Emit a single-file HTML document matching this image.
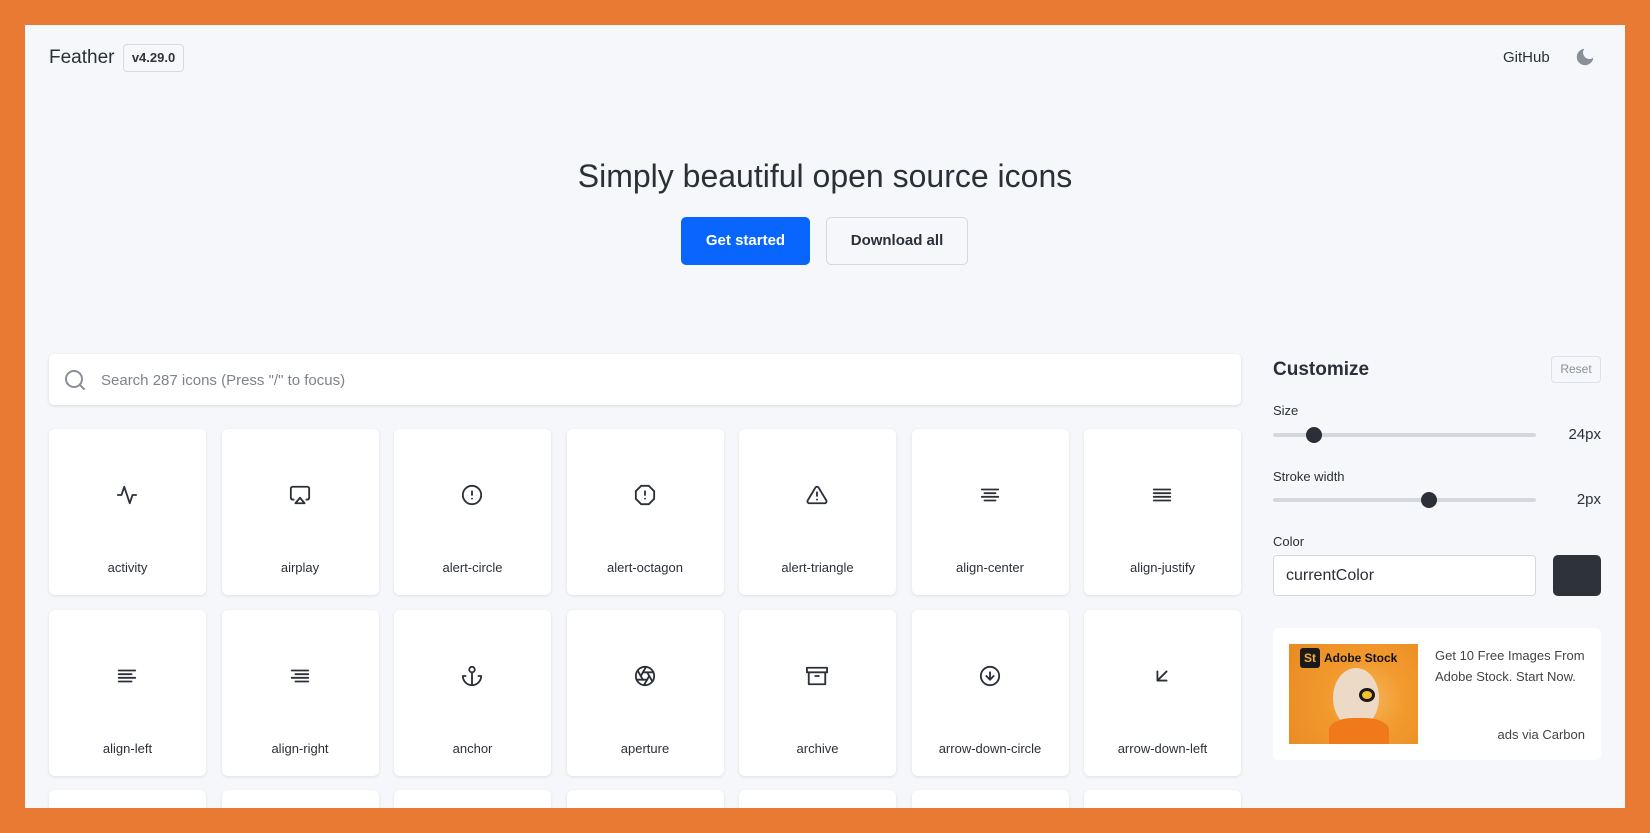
<!DOCTYPE html>
<html><head><meta charset="utf-8"><style>
*{box-sizing:border-box;margin:0;padding:0}
html,body{width:1650px;height:833px;overflow:hidden}
body{background:#e97a33;font-family:"Liberation Sans",sans-serif;color:#2b3038}
.page{position:absolute;left:25px;top:25px;width:1600px;height:783px;background:#f5f7fa;overflow:hidden}
.a{position:absolute}
.card{position:absolute;width:157px;height:166px;background:#fff;border-radius:6px;box-shadow:0 1px 3px rgba(0,0,0,.1)}
.card svg{position:absolute;left:67px;top:55px}
.card span{position:absolute;left:0;right:0;top:131px;text-align:center;font-size:13px;color:#2b3038}
svg{fill:none;stroke:#2b3038;stroke-width:2;stroke-linecap:round;stroke-linejoin:round}
.track{position:absolute;height:4px;background:#d4d7db;border-radius:2px}
.knob{position:absolute;width:16px;height:16px;border-radius:50%;background:#2b3038}
</style></head><body>
<div class="page">
<div class="a" style="left:24px;top:22px;font-size:19px;color:#2b3038">Feather</div>
<div class="a" style="left:98px;top:19px;width:61px;height:28px;border:1px solid #d7dbe0;border-radius:4px;font-size:13px;font-weight:bold;line-height:26px;text-align:center;color:#333">v4.29.0</div>
<div class="a" style="left:1478px;top:24px;font-size:15px">GitHub</div>
<svg class="a" style="left:1549px;top:21px;stroke:none;fill:#8a8f98" width="22" height="22" viewBox="0 0 24 24"><path d="M21 12.79A9 9 0 1 1 11.21 3 7 7 0 0 0 21 12.79z"/></svg>
<div class="a" style="left:0;width:1600px;top:133px;text-align:center;font-size:32px;color:#2b3038">Simply beautiful open source icons</div>
<div class="a" style="left:656px;top:192px;width:129px;height:48px;background:#0866ff;border-radius:5px;color:#fff;font-weight:bold;font-size:15px;line-height:48px;text-align:center">Get started</div>
<div class="a" style="left:801px;top:192px;width:142px;height:48px;background:#f5f7fa;border:1px solid #d5d9de;border-radius:5px;font-weight:bold;font-size:15px;line-height:46px;text-align:center;color:#2b3038">Download all</div>
<div class="a" style="left:24px;top:329px;width:1192px;height:51px;background:#fff;border-radius:5px;box-shadow:0 1px 3px rgba(0,0,0,.12)"></div>
<svg class="a" style="left:38px;top:343px;stroke:#8a8f98" width="24" height="24" viewBox="0 0 24 24"><circle cx="11" cy="11" r="8"/><line x1="21" y1="21" x2="16.65" y2="16.65"/></svg>
<div class="a" style="left:76px;top:347px;font-size:15px;color:#7d838b">Search 287 icons (Press "/" to focus)</div>

<div class="a" style="left:1248px;top:334px;font-size:19px;font-weight:bold;color:#2b3038">Customize</div>
<div class="a" style="left:1526px;top:331px;width:50px;height:27px;border:1px solid #dfe2e6;border-radius:4px;font-size:12px;color:#8a8f98;text-align:center;line-height:25px">Reset</div>
<div class="a" style="left:1248px;top:378px;font-size:13px">Size</div>
<div class="track" style="left:1248px;top:408px;width:263px"></div>
<div class="knob" style="left:1281px;top:402px"></div>
<div class="a" style="left:1520px;top:401px;width:56px;text-align:right;font-size:15px">24px</div>
<div class="a" style="left:1248px;top:444px;font-size:13px">Stroke width</div>
<div class="track" style="left:1248px;top:473px;width:263px"></div>
<div class="knob" style="left:1396px;top:467px"></div>
<div class="a" style="left:1520px;top:466px;width:56px;text-align:right;font-size:15px">2px</div>
<div class="a" style="left:1248px;top:509px;font-size:13px">Color</div>
<div class="a" style="left:1248px;top:530px;width:263px;height:41px;background:#fff;border:1px solid #d5d9de;border-radius:4px;font-size:16px;line-height:39px;padding-left:12px">currentColor</div>
<div class="a" style="left:1528px;top:530px;width:48px;height:41px;background:#2d3339;border-radius:5px"></div>

<div class="a" style="left:1248px;top:603px;width:328px;height:132px;background:#fff;border-radius:5px"></div>
<div class="a" style="left:1264px;top:619px;width:129px;height:100px;background:radial-gradient(circle at 60% 55%,#f7b65a 0,#f29a2e 40%,#e98a22 100%);overflow:hidden">
 <div class="a" style="left:44px;top:24px;width:46px;height:60px;border-radius:50%;background:#ecd9c6"></div>
 <div class="a" style="left:40px;top:74px;width:60px;height:30px;border-radius:40% 40% 0 0;background:#f07a1a"></div>
 <div class="a" style="left:70px;top:44px;width:16px;height:14px;border-radius:50%;background:#f4c030;border:3px solid #1a1a1a"></div>
 <div class="a" style="left:11px;top:4px;width:20px;height:20px;background:#1a1a1a;border-radius:3px;color:#f4b030;font-weight:bold;font-size:12px;line-height:20px;text-align:center">St</div>
 <div class="a" style="left:35px;top:7px;font-size:12px;font-weight:bold;color:#111">Adobe Stock</div>
</div>
<div class="a" style="left:1410px;top:620px;width:150px;font-size:13px;line-height:21px;color:#444">Get 10 Free Images From Adobe Stock. Start Now.</div>
<div class="a" style="left:1410px;top:702px;width:150px;text-align:right;font-size:13px;color:#444">ads via Carbon</div>

<div class="card" style="left:24px;top:404px"><svg width="22" height="22" viewBox="0 0 24 24"><polyline points="22 12 18 12 15 21 9 3 6 12 2 12"/></svg><span>activity</span></div>
<div class="card" style="left:196.5px;top:404px"><svg width="22" height="22" viewBox="0 0 24 24"><path d="M5 17H4a2 2 0 0 1-2-2V5a2 2 0 0 1 2-2h16a2 2 0 0 1 2 2v10a2 2 0 0 1-2 2h-1"/><polygon points="12 15 17 21 7 21 12 15"/></svg><span>airplay</span></div>
<div class="card" style="left:369px;top:404px"><svg width="22" height="22" viewBox="0 0 24 24"><circle cx="12" cy="12" r="10"/><line x1="12" y1="8" x2="12" y2="12"/><line x1="12" y1="16" x2="12.01" y2="16"/></svg><span>alert-circle</span></div>
<div class="card" style="left:541.5px;top:404px"><svg width="22" height="22" viewBox="0 0 24 24"><polygon points="7.86 2 16.14 2 22 7.86 22 16.14 16.14 22 7.86 22 2 16.14 2 7.86 7.86 2"/><line x1="12" y1="8" x2="12" y2="12"/><line x1="12" y1="16" x2="12.01" y2="16"/></svg><span>alert-octagon</span></div>
<div class="card" style="left:714px;top:404px"><svg width="22" height="22" viewBox="0 0 24 24"><path d="M10.290 3.86L1.82 18a2 2 0 0 0 1.71 3h16.94a2 2 0 0 0 1.71-3L13.71 3.86a2 2 0 0 0-3.42 0z"/><line x1="12" y1="9" x2="12" y2="13"/><line x1="12" y1="17" x2="12.01" y2="17"/></svg><span>alert-triangle</span></div>
<div class="card" style="left:886.5px;top:404px"><svg width="22" height="22" viewBox="0 0 24 24"><line x1="18" y1="10" x2="6" y2="10"/><line x1="21" y1="6" x2="3" y2="6"/><line x1="21" y1="14" x2="3" y2="14"/><line x1="18" y1="18" x2="6" y2="18"/></svg><span>align-center</span></div>
<div class="card" style="left:1059px;top:404px"><svg width="22" height="22" viewBox="0 0 24 24"><line x1="21" y1="10" x2="3" y2="10"/><line x1="21" y1="6" x2="3" y2="6"/><line x1="21" y1="14" x2="3" y2="14"/><line x1="21" y1="18" x2="3" y2="18"/></svg><span>align-justify</span></div>
<div class="card" style="left:24px;top:585px"><svg width="22" height="22" viewBox="0 0 24 24"><line x1="17" y1="10" x2="3" y2="10"/><line x1="21" y1="6" x2="3" y2="6"/><line x1="21" y1="14" x2="3" y2="14"/><line x1="17" y1="18" x2="3" y2="18"/></svg><span>align-left</span></div>
<div class="card" style="left:196.5px;top:585px"><svg width="22" height="22" viewBox="0 0 24 24"><line x1="21" y1="10" x2="7" y2="10"/><line x1="21" y1="6" x2="3" y2="6"/><line x1="21" y1="14" x2="3" y2="14"/><line x1="21" y1="18" x2="7" y2="18"/></svg><span>align-right</span></div>
<div class="card" style="left:369px;top:585px"><svg width="22" height="22" viewBox="0 0 24 24"><circle cx="12" cy="5" r="3"/><line x1="12" y1="22" x2="12" y2="8"/><path d="M5 12H2a10 10 0 0 0 20 0h-3"/></svg><span>anchor</span></div>
<div class="card" style="left:541.5px;top:585px"><svg width="22" height="22" viewBox="0 0 24 24"><circle cx="12" cy="12" r="10"/><line x1="14.31" y1="8" x2="20.05" y2="17.94"/><line x1="9.69" y1="8" x2="21.17" y2="8"/><line x1="7.38" y1="12" x2="13.12" y2="2.06"/><line x1="9.69" y1="16" x2="3.95" y2="6.06"/><line x1="14.31" y1="16" x2="2.83" y2="16"/><line x1="16.62" y1="12" x2="10.88" y2="21.94"/></svg><span>aperture</span></div>
<div class="card" style="left:714px;top:585px"><svg width="22" height="22" viewBox="0 0 24 24"><polyline points="21 8 21 21 3 21 3 8"/><rect x="1" y="3" width="22" height="5"/><line x1="10" y1="12" x2="14" y2="12"/></svg><span>archive</span></div>
<div class="card" style="left:886.5px;top:585px"><svg width="22" height="22" viewBox="0 0 24 24"><circle cx="12" cy="12" r="10"/><polyline points="8 12 12 16 16 12"/><line x1="12" y1="8" x2="12" y2="16"/></svg><span>arrow-down-circle</span></div>
<div class="card" style="left:1059px;top:585px"><svg width="22" height="22" viewBox="0 0 24 24"><line x1="17" y1="7" x2="7" y2="17"/><polyline points="17 17 7 17 7 7"/></svg><span>arrow-down-left</span></div>
<div class="card" style="left:24px;top:765px;height:18px;border-radius:6px 6px 0 0"></div>
<div class="card" style="left:196.5px;top:765px;height:18px;border-radius:6px 6px 0 0"></div>
<div class="card" style="left:369px;top:765px;height:18px;border-radius:6px 6px 0 0"></div>
<div class="card" style="left:541.5px;top:765px;height:18px;border-radius:6px 6px 0 0"></div>
<div class="card" style="left:714px;top:765px;height:18px;border-radius:6px 6px 0 0"></div>
<div class="card" style="left:886.5px;top:765px;height:18px;border-radius:6px 6px 0 0"></div>
<div class="card" style="left:1059px;top:765px;height:18px;border-radius:6px 6px 0 0"></div>
</div>
</body></html>
